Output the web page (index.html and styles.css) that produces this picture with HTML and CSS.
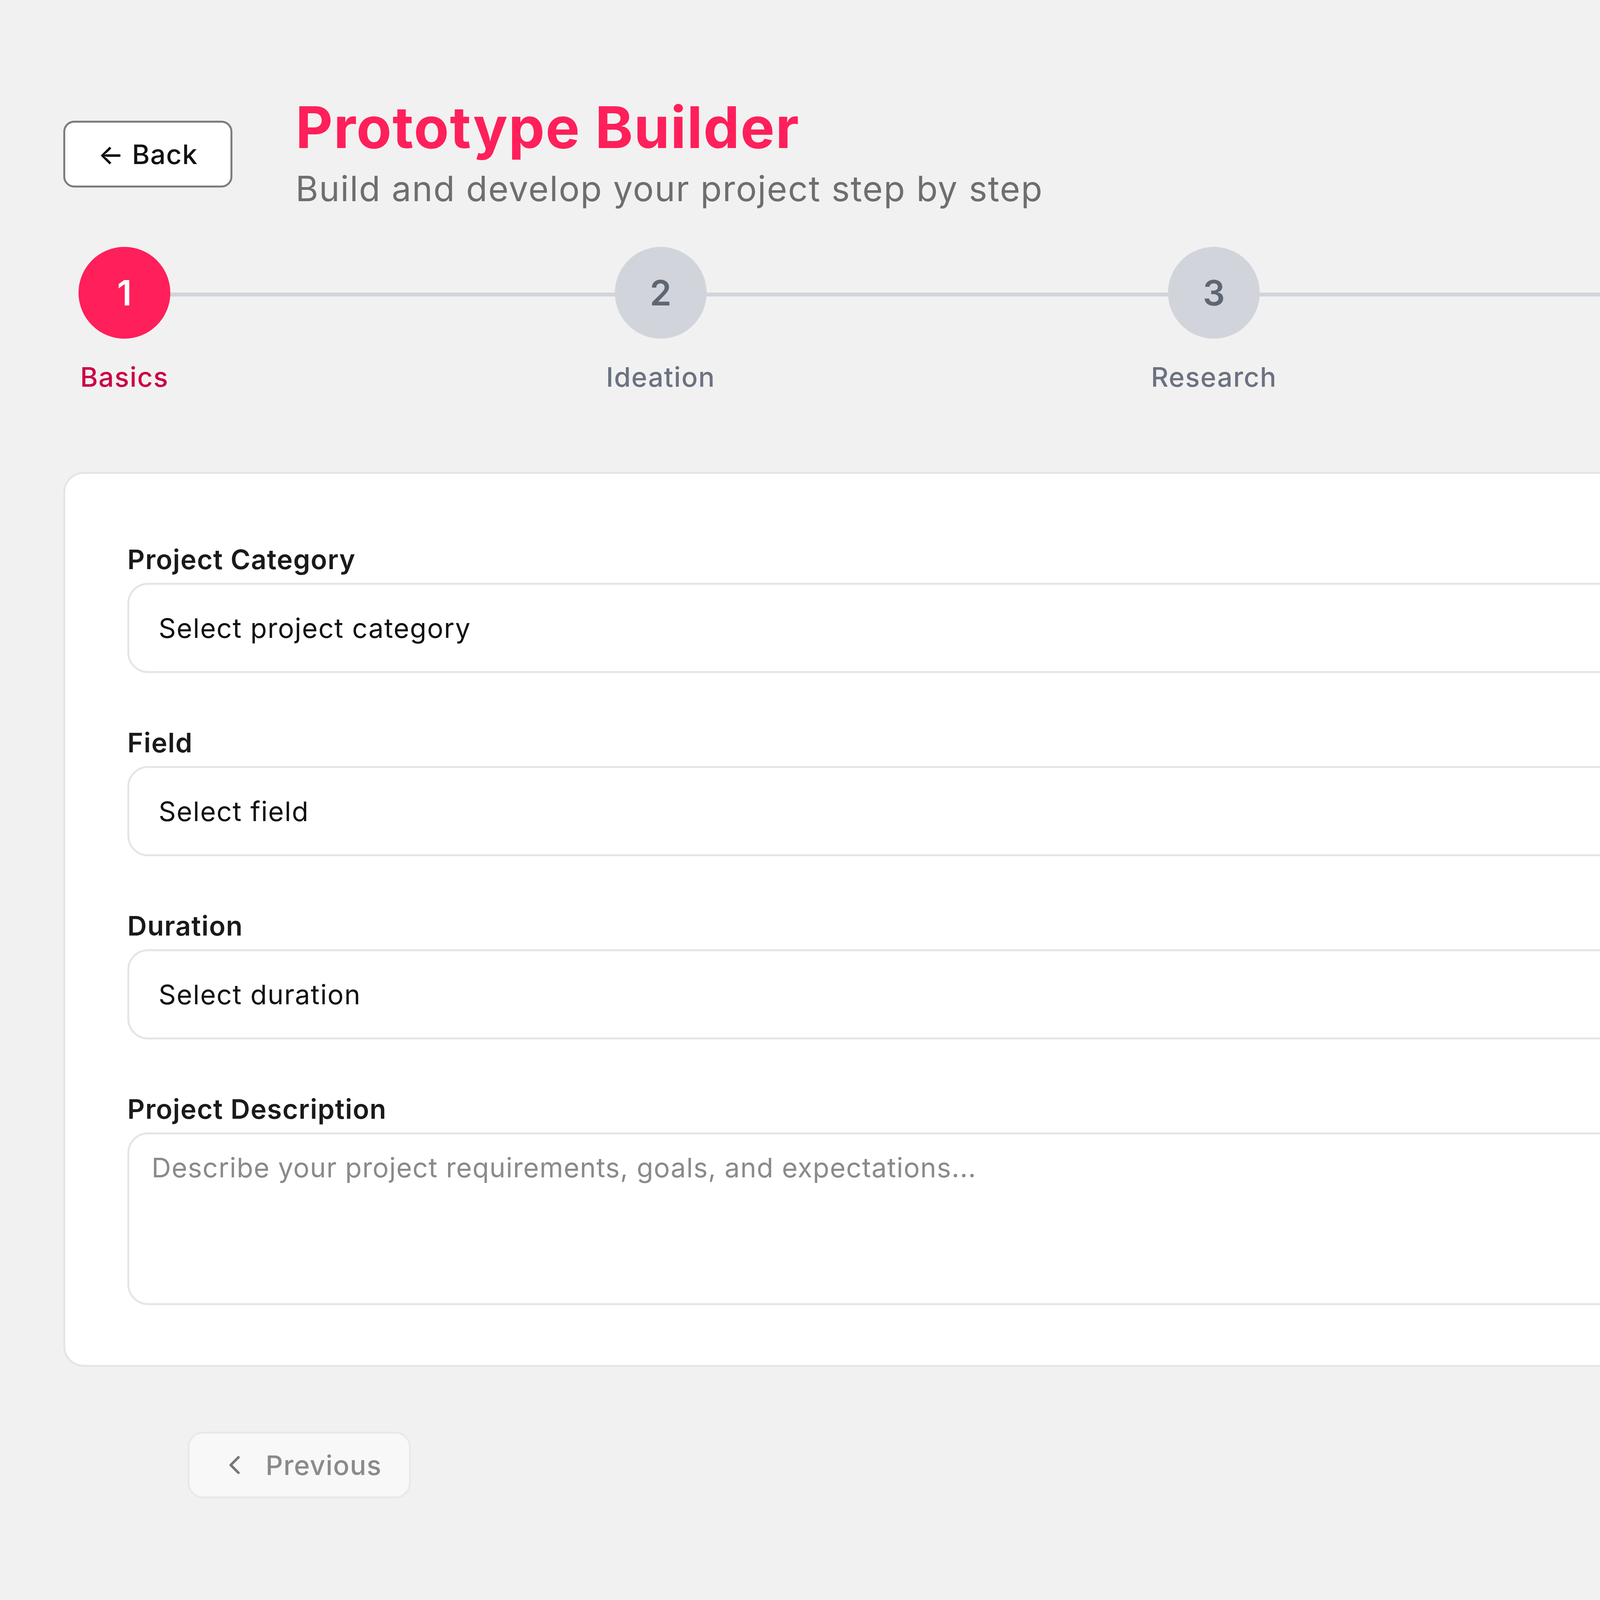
FILE: index.html
```html
<!DOCTYPE html>
<html lang="en">
<head>
    <meta charset="UTF-8">
    <meta name="viewport" content="width=device-width, initial-scale=1.0">
    <link rel="stylesheet" href="styles.css">
    <title>Prototype Builder</title>
</head>
<body>
    <div class="page">
        <!-- Header -->
        <header class="header">
            <button class="back-btn" type="button">← Back</button>
            <div class="heading">
                <h1 class="title">Prototype Builder</h1>
                <p class="subtitle">Build and develop your project step by step</p>
            </div>
        </header>

        <!-- Progress steps -->
        <div class="steps">
            <div class="steps-line"></div>
            <div class="step active">
                <div class="step-col">
                    <div class="step-circle">1</div>
                    <span class="step-label">Basics</span>
                </div>
            </div>
            <div class="step">
                <div class="step-col">
                    <div class="step-circle">2</div>
                    <span class="step-label">Ideation</span>
                </div>
            </div>
            <div class="step">
                <div class="step-col">
                    <div class="step-circle">3</div>
                    <span class="step-label">Research</span>
                </div>
            </div>
            <div class="step">
                <div class="step-col">
                    <div class="step-circle">4</div>
                    <span class="step-label">Prototype</span>
                </div>
            </div>
            <div class="step">
                <div class="step-col">
                    <div class="step-circle">5</div>
                    <span class="step-label">Review</span>
                </div>
            </div>
        </div>

        <!-- Step 1 form -->
        <div class="card">
            <div class="form-group">
                <label class="form-label" for="category">Project Category</label>
                <select class="form-select" id="category">
                    <option>Select project category</option>
                </select>
            </div>
            <div class="form-group">
                <label class="form-label" for="field">Field</label>
                <select class="form-select" id="field">
                    <option>Select field</option>
                </select>
            </div>
            <div class="form-group">
                <label class="form-label" for="duration">Duration</label>
                <select class="form-select" id="duration">
                    <option>Select duration</option>
                </select>
            </div>
            <div class="form-group">
                <label class="form-label" for="description">Project Description</label>
                <textarea class="form-textarea" id="description" placeholder="Describe your project requirements, goals, and expectations..."></textarea>
            </div>
        </div>

        <!-- Navigation -->
        <div class="nav-row">
            <button class="prev-btn" type="button" disabled>
                <svg class="prev-icon" viewBox="0 0 24 24" fill="none" stroke="currentColor" stroke-width="2" stroke-linecap="round" stroke-linejoin="round">
                    <path d="m15 18-6-6 6-6"/>
                </svg>
                Previous
            </button>
        </div>
    </div>
</body>
</html>
```

FILE: styles.css
```css
body {
    margin: 0;
    background-color: #f1f1f1;
    font-family: Inter, "Open Sans", sans-serif;
    color: #111;
}

/* the layout is wider than the window, clip it here */
.page {
    overflow-x: hidden;
    padding: 237px 0 0 162px;
}

/* Header */
.header {
    display: flex;
    align-items: center;
    gap: 161px;
}

.back-btn {
    display: inline-flex;
    align-items: center;
    height: 171px;
    padding: 0 84px;
    border: 5px solid #7d7d7d;
    border-radius: 28px;
    background-color: #fff;
    font-family: inherit;
    font-size: 69px;
    font-weight: 500;
    letter-spacing: 0.02em;
    color: #111;
}

.title {
    margin: 0;
    font-size: 147px;
    line-height: 177px;
    font-weight: 700;
    letter-spacing: 0.015em;
    color: #ff1f5a;
}

.subtitle {
    margin: 0;
    font-size: 89px;
    line-height: 138px;
    letter-spacing: 0.024em;
    color: #6e6e6e;
}

/* Steps */
.steps {
    position: relative;
    display: flex;
    width: 7000px;
    margin: 80px 0 0 39px;
}

.steps-line {
    position: absolute;
    left: 0;
    right: 0;
    top: 117px;
    height: 10px;
    background-color: #d1d5db;
}

.step {
    flex: 1 1 auto;
    display: flex;
}

.step-col {
    display: flex;
    flex-direction: column;
    align-items: center;
}

.step-circle {
    position: relative;
    z-index: 1;
    width: 235px;
    height: 235px;
    border-radius: 50%;
    display: flex;
    justify-content: center;
    align-items: center;
    background-color: #d1d5db;
    color: #5f6673;
    font-size: 89px;
    font-weight: 600;
}

.step-label {
    margin-top: 49px;
    font-size: 69px;
    line-height: 98px;
    font-weight: 500;
    letter-spacing: 0.025em;
    color: #6b7280;
}

.step.active .step-circle {
    background-color: #ff1f5a;
    color: #fff;
}

.step.active .step-label {
    color: #cc0044;
}

/* Form card */
.card {
    width: 7000px;
    margin-top: 194px;
    padding: 170px 159px 153px;
    border: 5px solid #e5e5e5;
    border-radius: 53px;
    background-color: #fff;
}

.form-group + .form-group {
    margin-top: 129px;
}

.form-label {
    display: block;
    margin-bottom: 11px;
    font-size: 69px;
    line-height: 98px;
    font-weight: 600;
    letter-spacing: 0.02em;
    color: #1a1a1a;
}

.form-select,
.form-textarea {
    box-sizing: border-box;
    display: block;
    width: 100%;
    border: 5px solid #e5e5e5;
    border-radius: 53px;
    background-color: #fff;
    font-family: inherit;
    font-size: 69px;
    letter-spacing: 0.025em;
    color: #111;
}

.form-select {
    height: 231px;
    padding: 0 75px;
    appearance: none;
    -webkit-appearance: none;
}

.form-textarea {
    height: 442px;
    padding: 36px 57px;
    line-height: 98px;
    letter-spacing: 0.02em;
    resize: none;
}

.form-textarea::placeholder {
    color: #8a8a8a;
}

/* Bottom navigation */
.nav-row {
    display: flex;
    margin-top: 166px;
    padding-left: 318px;
}

.prev-btn {
    display: inline-flex;
    align-items: center;
    gap: 40px;
    height: 171px;
    padding: 0 70px 0 76px;
    border: 5px solid #e9e9e9;
    border-radius: 40px;
    background-color: #f8f8f8;
    font-family: inherit;
    font-size: 69px;
    font-weight: 500;
    letter-spacing: 0.02em;
    color: #8a8a8a;
}

.prev-icon {
    width: 79px;
    height: 79px;
    color: #777;
}
```
